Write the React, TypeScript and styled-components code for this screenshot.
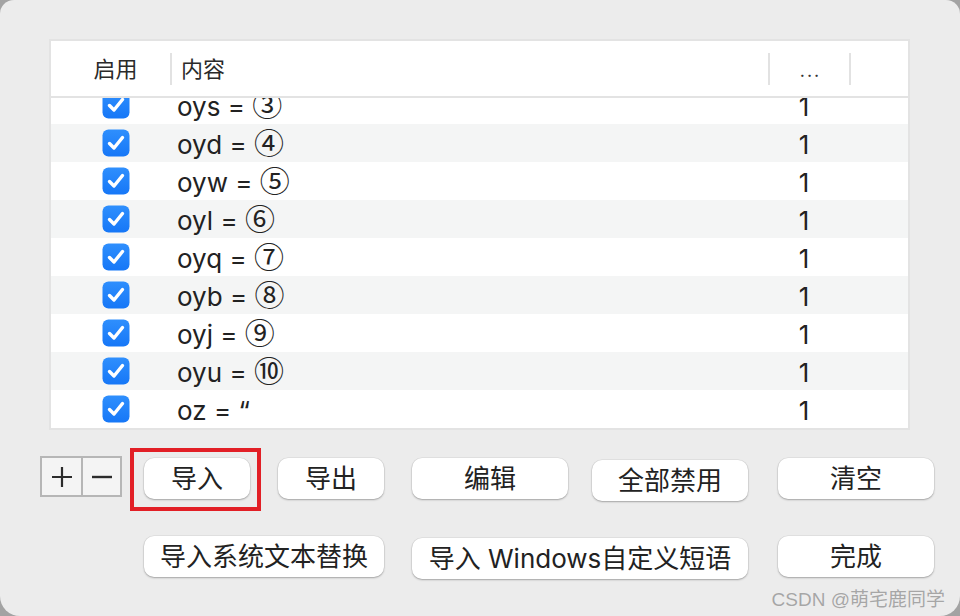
import React from "react";
import styled, { createGlobalStyle } from "styled-components";

const Global = createGlobalStyle`
  html, body { margin: 0; padding: 0; background: #a3a3a3; }
  body { width: 960px; height: 616px; overflow: hidden; }
  * { box-sizing: border-box; }
`;

const FONT = `Inter, "Noto Sans CJK SC", "Noto Sans", sans-serif`;

const Window = styled.div`
  position: relative;
  width: 960px;
  height: 616px;
  background: #ececec;
  border-radius: 14px 14px 20px 20px;
  padding: 39px 50px 0 49px;
  font-family: ${FONT};
  color: #222;
`;

const Table = styled.div`
  width: 861px;
  border: 2px solid #e3e3e3;
  background: #fff;
`;

const COLS = "119px 598px 81px 59px";

const HeaderRow = styled.div`
  display: grid;
  grid-template-columns: ${COLS};
  align-items: center;
  height: 57px;
  border-bottom: 2px solid #e3e3e3;
`;

const HeaderCell = styled.div<{ $sep?: boolean; $align: "center" | "start" }>`
  height: 32px;
  display: flex;
  align-items: center;
  justify-content: ${(p) => (p.$align === "center" ? "center" : "flex-start")};
  border-left: ${(p) => (p.$sep ? "2px solid #e2e2e2" : "none")};
  padding: ${(p) => (p.$align === "center" ? "0 0 0 10px" : "0 0 0 9px")};
  font-size: 22px;
  line-height: 1;
  color: #2a2a2a;
`;

const Dots = styled.span`
  font-size: 18px;
  letter-spacing: 2px;
  margin-left: -8px;
  padding-top: 4px;
  color: #333;
`;

const Body = styled.div`
  height: 330px;
  overflow: hidden;
`;

const List = styled.div`
  margin-top: -12px;
`;

const Row = styled.div<{ $alt: boolean }>`
  display: grid;
  grid-template-columns: ${COLS};
  align-items: center;
  height: 38px;
  background: ${(p) => (p.$alt ? "#f4f5f5" : "#ffffff")};
`;

const CheckCell = styled.div`
  display: flex;
  justify-content: center;
  padding-left: 11px;
`;

const Content = styled.div`
  padding: 3px 0 0 7px;
  font-size: 26px;
  line-height: 28px;
  height: 31px;
  color: #222;
  white-space: nowrap;
`;

const Circled = styled.span`
  font-family: "Noto Sans CJK SC", sans-serif;
  font-size: 30px;
  line-height: 0;
`;

const Count = styled.div`
  text-align: center;
  padding: 3px 9px 0 0;
  font-size: 26px;
  line-height: 28px;
  color: #222;
`;

const Controls = styled.div`
  display: grid;
  grid-template-columns: 82px 22px 106px 28px 106px 28px 156px 24px 156px 30px 156px;
  row-gap: 35px;
  margin-left: -9px;
  margin-top: 28px;
`;

const Cell = styled.div<{ $col: string }>`
  grid-column: ${(p) => p.$col};
  position: relative;
`;

const PlusMinus = styled.div`
  display: grid;
  grid-template-columns: 1fr 1fr;
  width: 82px;
  height: 41px;
  border: 2px solid #b6b6b6;
  background: #f4f4f4;
  margin-top: -2px;
`;

const PMButton = styled.div<{ $first?: boolean }>`
  display: flex;
  align-items: center;
  justify-content: center;
  border-left: ${(p) => (p.$first ? "none" : "2px solid #b6b6b6")};
`;

const Button = styled.div<{ $shift?: boolean }>`
  height: 41px;
  margin-top: ${(p) => (p.$shift ? "2px" : "0")};
  background: #ffffff;
  border-radius: 10px;
  box-shadow: 0 1px 2px rgba(0, 0, 0, 0.28), 0 0 0 0.5px rgba(0, 0, 0, 0.08);
  display: flex;
  align-items: center;
  justify-content: center;
  font-size: 26px;
  line-height: 1;
  color: #222;
  white-space: nowrap;
`;

const Highlight = styled.div`
  position: absolute;
  top: -10px;
  bottom: -10px;
  left: -14px;
  right: -11px;
  border: 4px solid #e21f26;
  pointer-events: none;
`;

const Watermark = styled.div`
  position: absolute;
  right: 15px;
  bottom: 7px;
  font-family: "Liberation Sans", "Noto Sans CJK SC", sans-serif;
  font-size: 19px;
  line-height: 1;
  color: #a6a6a6;
  text-shadow: 0 0 1px rgba(255, 255, 255, 0.6);
`;

const Checkbox = () => (
  <svg width="28" height="28" viewBox="0 0 28 28">
    <defs>
      <linearGradient id="cbg" x1="0" y1="0" x2="0" y2="1">
        <stop offset="0" stopColor="#2f8ffd" />
        <stop offset="1" stopColor="#1677f7" />
      </linearGradient>
    </defs>
    <rect x="0.5" y="0.5" width="27" height="27" rx="6" fill="url(#cbg)" />
    <path
      d="M7.5 14.5 L12 19 L20.5 8.5"
      fill="none"
      stroke="#fff"
      strokeWidth="3.4"
      strokeLinecap="round"
      strokeLinejoin="round"
    />
  </svg>
);

const PlusIcon = () => (
  <svg width="22" height="22" viewBox="0 0 22 22">
    <path d="M11 1 V21 M1 11 H21" stroke="#2b2b2b" strokeWidth="2.2" />
  </svg>
);

const MinusIcon = () => (
  <svg width="22" height="22" viewBox="0 0 22 22">
    <path d="M1 11 H21" stroke="#2b2b2b" strokeWidth="2.4" />
  </svg>
);

const rows: [string, string][] = [
  ["oys = ", "③"],
  ["oyd = ", "④"],
  ["oyw = ", "⑤"],
  ["oyl = ", "⑥"],
  ["oyq = ", "⑦"],
  ["oyb = ", "⑧"],
  ["oyj = ", "⑨"],
  ["oyu = ", "⑩"],
  ["oz = ", ""],
];

export default function App() {
  return (
    <>
      <Global />
      <Window>
        <Table>
          <HeaderRow>
            <HeaderCell $align="center">启用</HeaderCell>
            <HeaderCell $align="start" $sep>
              内容
            </HeaderCell>
            <HeaderCell $align="center" $sep>
              <Dots>...</Dots>
            </HeaderCell>
            <HeaderCell $align="start" $sep />
          </HeaderRow>
          <Body>
            <List>
              {rows.map(([k, v], i) => (
                <Row key={k} $alt={i % 2 === 1}>
                  <CheckCell>
                    <Checkbox />
                  </CheckCell>
                  <Content>
                    {k}
                    {v ? <Circled>{v}</Circled> : "“"}
                  </Content>
                  <Count>1</Count>
                  <div />
                </Row>
              ))}
            </List>
          </Body>
        </Table>

        <Controls>
          <Cell $col="1">
            <PlusMinus>
              <PMButton $first>
                <PlusIcon />
              </PMButton>
              <PMButton>
                <MinusIcon />
              </PMButton>
            </PlusMinus>
          </Cell>
          <Cell $col="3">
            <Button>导入</Button>
            <Highlight />
          </Cell>
          <Cell $col="5">
            <Button>导出</Button>
          </Cell>
          <Cell $col="7">
            <Button>编辑</Button>
          </Cell>
          <Cell $col="9">
            <Button $shift>全部禁用</Button>
          </Cell>
          <Cell $col="11">
            <Button>清空</Button>
          </Cell>

          <Cell $col="3 / 6">
            <Button>导入系统文本替换</Button>
          </Cell>
          <Cell $col="7 / 10">
            <Button $shift>导入 Windows自定义短语</Button>
          </Cell>
          <Cell $col="11">
            <Button>完成</Button>
          </Cell>
        </Controls>
        <Watermark>CSDN @萌宅鹿同学</Watermark>
      </Window>
    </>
  );
}
